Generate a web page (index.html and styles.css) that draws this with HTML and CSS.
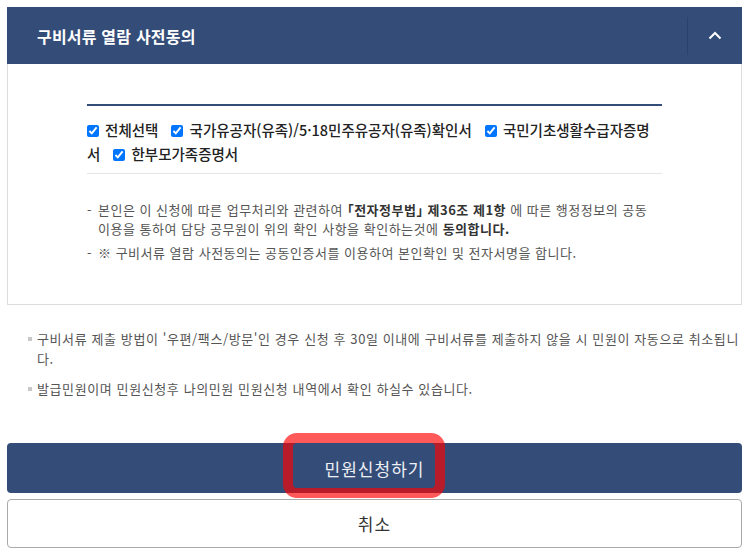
FILE: index.html
```html
<!DOCTYPE html>
<html lang="ko">
<head>
    <meta charset="UTF-8">
    <meta name="viewport" content="width=device-width, initial-scale=1.0">
    <title>구비서류 열람 사전동의</title>
    <link rel="stylesheet" href="styles.css">
</head>
<body>
    <div class="wrap">
        <div class="panel">
            <div class="panel-head">
                <h2>구비서류 열람 사전동의</h2>
                <button class="toggle" type="button" aria-label="접기">
                    <svg width="14" height="9" viewBox="0 0 14 9"><path d="M1.5 7.5 L7 2 L12.5 7.5" fill="none" stroke="#fff" stroke-width="2"/></svg>
                </button>
            </div>
            <div class="panel-body">
                <div class="checks">
                    <label class="chk"><input type="checkbox" checked> 전체선택</label>
                    <label class="chk"><input type="checkbox" checked> 국가유공자(유족)/5·18민주유공자(유족)확인서</label>
                    <label class="chk"><input type="checkbox" checked> 국민기초생활수급자증명서</label>
                    <label class="chk"><input type="checkbox" checked> 한부모가족증명서</label>
                </div>
                <ul class="agree">
                    <li>본인은 이 신청에 따른 업무처리와 관련하여 <b>「전자정부법」 제36조 제1항</b> 에 따른 행정정보의 공동 이용을 통하여 담당 공무원이 위의 확인 사항을 확인하는것에 <b>동의합니다.</b></li>
                    <li>※ 구비서류 열람 사전동의는 공동인증서를 이용하여 본인확인 및 전자서명을 합니다.</li>
                </ul>
            </div>
        </div>

        <ul class="notes">
            <li>구비서류 제출 방법이 '우편/팩스/방문'인 경우 신청 후 30일 이내에 구비서류를 제출하지 않을 시 민원이 자동으로 취소됩니다.</li>
            <li>발급민원이며 민원신청후 나의민원 민원신청 내역에서 확인 하실수 있습니다.</li>
        </ul>

        <div class="actions">
            <button class="btn btn-primary" type="button">민원신청하기<span class="mark"></span></button>
            <button class="btn btn-cancel" type="button">취소</button>
        </div>
    </div>
</body>
</html>
```

FILE: styles.css
```css
body {
    margin: 0;
    font-family: "Noto Sans CJK KR", "Noto Sans", sans-serif;
    color: #333;
    background: #fff;
}
.wrap {
    padding: 7px 8px 8px 7px;
}
.panel {
    border: 1px solid #ddd;
    border-top: none;
}
.panel-head {
    display: flex;
    align-items: center;
    height: 57px;
    background-color: #344d78;
    margin: 0 -1px;
}
.panel-head h2 {
    flex: 1;
    margin: 0;
    padding-left: 30px;
    color: #fff;
    font-size: 16px;
    font-weight: bold;
    letter-spacing: 0.2px;
}
.toggle {
    width: 55px;
    height: 38px;
    border: none;
    border-left: 1px solid #2c4169;
    background: none;
    padding: 0;
    display: flex;
    align-items: center;
    justify-content: center;
    cursor: pointer;
}
.panel-body {
    padding: 40px 79px 42px 79px;
}
.checks {
    border-top: 2px solid #344d78;
    border-bottom: 1px solid #e6e6e6;
    padding: 12px 0 7px;
    font-size: 14.5px;
    line-height: 24px;
    color: #222;
    font-weight: 500;
}
.chk {
    margin-right: 9px;
}
.chk input {
    width: 12px;
    height: 12px;
    margin: 0 2px 0 0;
    vertical-align: -1px;
}
.agree {
    list-style: none;
    margin: 26px 0 0;
    padding: 0;
    font-size: 13px;
    letter-spacing: 0.5px;
    line-height: 19px;
    color: #555;
}
.agree li {
    position: relative;
    padding-left: 11px;
    margin-bottom: 5px;
}
.agree li:last-child {
    margin-bottom: 0;
}
.agree li::before {
    content: "-";
    position: absolute;
    left: 0;
}
.agree b {
    color: #333;
    font-feature-settings: "halt";
}
.notes {
    list-style: none;
    margin: 24px 0 0;
    padding: 0 0 0 30px;
    font-size: 13px;
    letter-spacing: 0.6px;
    line-height: 20px;
    color: #555;
}
.notes li {
    position: relative;
    margin-bottom: 10px;
}
.notes li::before {
    content: "";
    position: absolute;
    left: -9px;
    top: 8px;
    width: 4px;
    height: 4px;
    background: #c8c8c8;
}
.actions {
    margin-top: 44px;
    display: grid;
    gap: 6px;
}
.btn {
    width: 100%;
    height: 50px;
    font-family: inherit;
    font-size: 17px;
    letter-spacing: 1px;
    border-radius: 4px;
    cursor: pointer;
}
.btn-primary {
    position: relative;
    background-color: #344d78;
    color: #eef0f5;
    border: none;
}
.btn-cancel {
    height: 49px;
    background: #fff;
    color: #333;
    border: 1px solid #aaa;
}
.mark {
    position: absolute;
    left: 276px;
    top: -10px;
    width: 162px;
    height: 65px;
    box-sizing: border-box;
    border: 10px solid rgba(255, 0, 0, 0.65);
    border-radius: 14px;
    pointer-events: none;
}
```
